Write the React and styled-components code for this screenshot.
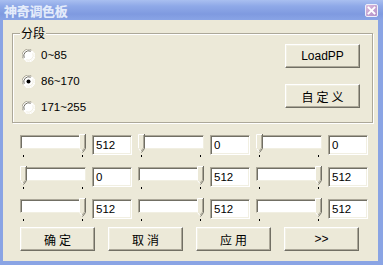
import React from "react";
import styled, { createGlobalStyle } from "styled-components";

const Global = createGlobalStyle`
  html, body { margin: 0; padding: 0; background: #ece9d8; }
  #root { width: 383px; height: 265px; }
`;

const UI = `"Liberation Sans", "Noto Sans CJK SC", sans-serif`;
const CJK = `"Noto Sans CJK SC", "Liberation Sans", sans-serif`;

const Window = styled.div`
  width: 383px;
  height: 265px;
  display: flex;
  flex-direction: column;
  background: #8aa4e4;
  box-sizing: border-box;
  overflow: hidden;
`;

const TitleBar = styled.div`
  height: 20px;
  flex: none;
  display: flex;
  align-items: center;
  justify-content: space-between;
  padding: 0 5px 0 4px;
  background: linear-gradient(180deg, #a9bff0 0%, #8fa9e8 30%, #7f9ae0 70%, #89a4e6 100%);
`;

const Title = styled.span`
  font-family: ${CJK};
  font-weight: 700;
  font-size: 13px;
  color: #e4ecfb;
  letter-spacing: -0.3px;
  text-shadow: 0 0 1px rgba(255,255,255,0.3);
`;

const CloseBtn = styled.div`
  width: 13px;
  height: 13px;
  box-sizing: border-box;
  border: 1px solid #eef0fa;
  border-radius: 2px;
  background: linear-gradient(135deg, #dcbddd 0%, #c29fcf 60%, #b393c9 100%);
  display: flex;
  align-items: center;
  justify-content: center;
`;

const Body = styled.div`
  flex: 1;
  margin: 0 5px 4px 3px;
  background: #ece9d8;
  display: flex;
  flex-direction: column;
  padding: 13px 0 0 9px;
`;

const GroupBox = styled.div`
  position: relative;
  width: 361px;
  height: 90px;
  box-sizing: border-box;
  border: 1px solid #aca899;
  box-shadow: 1px 1px 0 #fff, inset 1px 1px 0 #fff;
  display: flex;
  justify-content: space-between;
  padding: 0 12px 0 9px;
`;

const GroupLabel = styled.span`
  position: absolute;
  left: 7px;
  top: -8px;
  padding: 0 1px;
  background: #ece9d8;
  font-family: ${CJK};
  font-size: 12px;
  line-height: 14px;
  color: #000;
`;

const RadioCol = styled.div`
  display: flex;
  flex-direction: column;
  padding-top: 8px;
`;

const RadioRow = styled.div`
  height: 26px;
  display: flex;
  align-items: center;
  gap: 6px;
  font-family: ${UI};
  font-size: 11.5px;
  color: #000;
`;

const ButtonCol = styled.div`
  display: flex;
  flex-direction: column;
  gap: 16px;
  padding-top: 10px;
`;

const Button = styled.div`
  width: 75px;
  height: 24px;
  box-sizing: border-box;
  background: #ece9d8;
  border-top: 1px solid #fff;
  border-left: 1px solid #fff;
  border-right: 1px solid #716f64;
  border-bottom: 1px solid #716f64;
  box-shadow: inset -1px -1px 0 #aca899, inset 1px 1px 0 #f1efe2;
  display: flex;
  align-items: center;
  justify-content: center;
  font-family: ${(p) => (p.$cjk ? CJK : UI)};
  font-size: ${(p) => (p.$cjk ? "12px" : "12px")};
  letter-spacing: ${(p) => (p.$spaced ? "3px" : "0")};
  text-indent: ${(p) => (p.$spaced ? "3px" : "0")};
  color: #000;
`;

const Grid = styled.div`
  margin-top: 12px;
  margin-left: 8px;
  display: grid;
  grid-template-columns: repeat(3, 66px 40px);
  column-gap: 6px;
  row-gap: 12px;
  width: 352px;
  & > :nth-child(6n + 2), & > :nth-child(6n + 4) { margin-right: 2px; }
`;

const SliderBox = styled.div`
  position: relative;
  width: 66px;
  height: 20px;
`;

const Channel = styled.div`
  height: 14px;
  box-sizing: border-box;
  background: #fff;
  border-top: 1px solid #aca899;
  border-left: 1px solid #aca899;
  border-right: 1px solid #f1efe2;
  border-bottom: 1px solid #f1efe2;
  box-shadow: inset 1px 1px 0 #716f64;
`;

const Tick = styled.div`
  position: absolute;
  top: 20px;
  width: 1px;
  height: 2px;
  background: #000;
`;

const ThumbSvg = styled.svg`
  position: absolute;
  top: -1px;
`;

const Edit = styled.div`
  width: 40px;
  height: 20px;
  box-sizing: border-box;
  background: #fff;
  border-top: 1px solid #aca899;
  border-left: 1px solid #aca899;
  border-right: 1px solid #fff;
  border-bottom: 1px solid #fff;
  box-shadow: inset 1px 1px 0 #716f64, inset -1px -1px 0 #f1efe2;
  font-family: ${UI};
  font-size: 11.5px;
  line-height: 18px;
  padding-left: 3px;
  color: #000;
`;

const ButtonRow = styled.div`
  margin-top: 8px;
  margin-left: 8px;
  display: flex;
  gap: 13px;
`;

function Radio({ checked }) {
  return (
    <svg width="13" height="13" viewBox="0 0 13 13">
      <circle cx="6.5" cy="6.5" r="6" fill="#fff" />
      <path d="M1.2 9.5 A6 6 0 0 1 9.5 1.2" fill="none" stroke="#aca899" strokeWidth="1" />
      <path d="M2.2 8.8 A5 5 0 0 1 8.8 2.2" fill="none" stroke="#716f64" strokeWidth="1" />
      <path d="M11.8 3.5 A6 6 0 0 1 3.5 11.8" fill="none" stroke="#fff" strokeWidth="1" />
      <path d="M10.8 4.2 A5 5 0 0 1 4.2 10.8" fill="none" stroke="#f1efe2" strokeWidth="1" />
      {checked && <circle cx="6.5" cy="6.5" r="2" fill="#000" />}
    </svg>
  );
}

function Thumb({ left }) {
  return (
    <ThumbSvg width="7" height="19" viewBox="0 0 7 19" style={{ left }}>
      <polygon points="0,0 6,0 6,14 3,18 0,14" fill="#ece9d8" />
      <polyline points="0.5,14 0.5,0.5 6,0.5" fill="none" stroke="#fff" />
      <polyline points="6.5,0 6.5,14.5 3.5,18.5" fill="none" stroke="#716f64" />
      <polyline points="5.5,1 5.5,14 3,17" fill="none" stroke="#aca899" />
      <line x1="0.5" y1="14.5" x2="3" y2="17.5" stroke="#fff" />
    </ThumbSvg>
  );
}

function Slider({ value, max = 512 }) {
  const w = 66;
  const tw = 7;
  const left = Math.round((value / max) * (w - tw));
  return (
    <SliderBox>
      <Channel />
      <Tick style={{ left: 3 }} />
      <Tick style={{ left: w - 4 }} />
      <Thumb left={left} />
    </SliderBox>
  );
}

const rows = [
  [512, 0, 0],
  [0, 512, 512],
  [512, 512, 512],
];

export default function App() {
  return (
    <>
      <Global />
      <Window>
        <TitleBar>
          <Title>神奇调色板</Title>
          <CloseBtn>
            <svg width="9" height="9" viewBox="0 0 9 9">
              <path d="M1.5 1.5 L7.5 7.5 M7.5 1.5 L1.5 7.5" stroke="#fff" strokeWidth="1.8" strokeLinecap="square" />
            </svg>
          </CloseBtn>
        </TitleBar>
        <Body>
          <GroupBox>
            <GroupLabel>分段</GroupLabel>
            <RadioCol>
              <RadioRow><Radio />0~85</RadioRow>
              <RadioRow><Radio checked />86~170</RadioRow>
              <RadioRow><Radio />171~255</RadioRow>
            </RadioCol>
            <ButtonCol>
              <Button>LoadPP</Button>
              <Button $cjk $spaced>自定义</Button>
            </ButtonCol>
          </GroupBox>
          <Grid>
            {rows.map((r, i) =>
              r.map((v, j) => (
                <React.Fragment key={`${i}-${j}`}>
                  <Slider value={v} />
                  <Edit>{v}</Edit>
                </React.Fragment>
              ))
            )}
          </Grid>
          <ButtonRow>
            <Button $cjk $spaced>确定</Button>
            <Button $cjk $spaced>取消</Button>
            <Button $cjk $spaced>应用</Button>
            <Button>&gt;&gt;</Button>
          </ButtonRow>
        </Body>
      </Window>
    </>
  );
}
